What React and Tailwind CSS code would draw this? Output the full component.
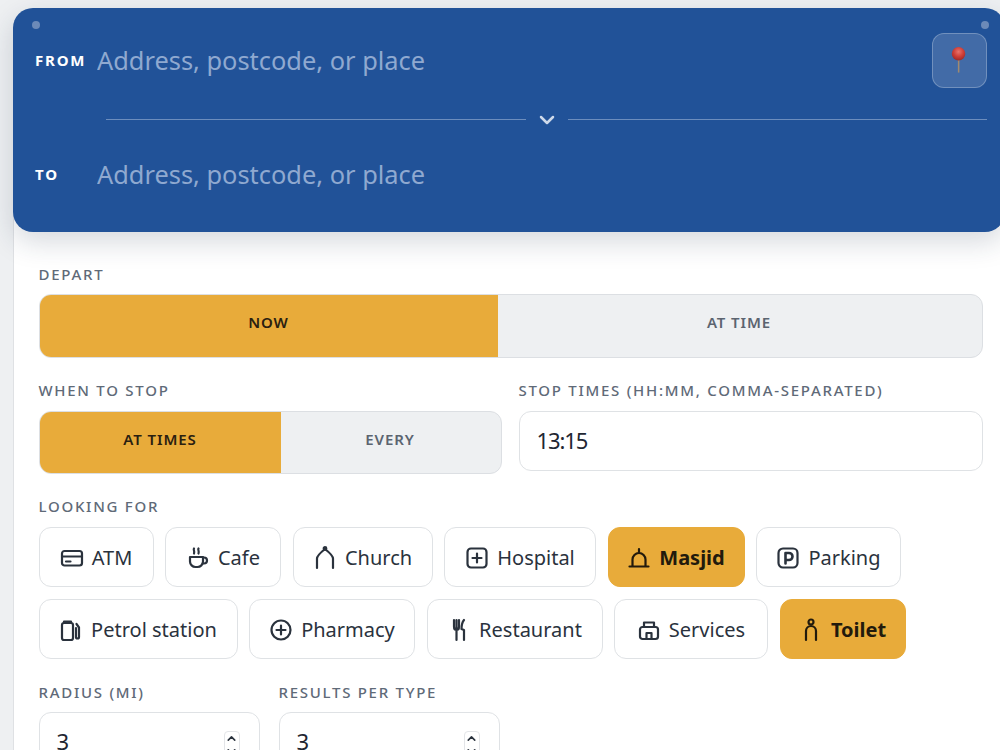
import { ChevronDown, ChevronUp } from 'lucide-react';

const uiFont = "font-['Noto_Sans',sans-serif]";
const labelClass = "block font-['Noto_Sans',sans-serif] text-[15px] font-medium leading-5 tracking-[0.115em] text-[#5f6a78]";

const icons = {
  atm: <><rect x="2" y="5" width="20" height="14.5" rx="2.5" /><path d="M2 10.5h20M6 15.500h4.500" /></>,
  cafe: <><path d="M4 11h13v4.500a5.500 5.500 0 0 1-5.500 5.500h-2A5.500 5.500 0 0 1 4 15.500z" /><path d="M17 11.500h1a3 3 0 0 1 0 6h-1.500" /><path d="M8 2.500c-1 1.200 1 2.800 0 5M12.500 2.500c-1 1.200 1 2.800 0 5" /></>,
  church: <><path d="M4 22v-9.500c0-3 3-5.500 8-9.500 5 4 8 6.500 8 9.500V22" /><circle cx="12" cy="2.500" r="1.300" fill="currentColor" /></>,
  hospital: <><rect x="2.500" y="2.500" width="19" height="19" rx="3.500" /><path d="M12 7.500v9M7.500 12h9" /></>,
  masjid: <><path d="M5.500 20v-6.500a6.500 6.500 0 0 1 13 0V20" /><path d="M2.500 20.500h19M12 3v4" /></>,
  parking: <><rect x="2.500" y="2.500" width="19" height="19" rx="4.500" /><path d="M9.500 17.500V7h3.500a3.500 3.500 0 0 1 0 7H9.500" strokeWidth="2.600" /></>,
  petrol: <><rect x="3" y="5" width="11" height="17" rx="2" /><path d="M5 5V3.500h7V5" /><path d="M17.500 6l2.500 3.500V19a1.500 1.500 0 0 1-3 0V10" /></>,
  pharmacy: <><circle cx="12" cy="12" r="9.500" /><path d="M12 7.500v9M7.500 12h9" /></>,
  restaurant: <><path d="M7 2v6.500c0 2 .8 3.500 2.500 3.500s2.500-1.500 2.500-3.500V2M9.500 2v20" /><path d="M17 22V12l-2.500-1c0-4 .8-7 2.500-9" /></>,
  services: <><path d="M7 9V4.500h10V9" /><rect x="3" y="9" width="18" height="12" rx="2.500" /><path d="M9.500 21v-6h5v6" /></>,
  toilet: <><circle cx="12" cy="4" r="2.500" /><path d="M7 22v-9a5 5 0 0 1 10 0v9" /></>,
};

const rowOne = [
  { name: 'ATM', icon: 'atm', width: 'w-[115px]' },
  { name: 'Cafe', icon: 'cafe', width: 'w-[116px]' },
  { name: 'Church', icon: 'church', width: 'w-[140px]' },
  { name: 'Hospital', icon: 'hospital', width: 'w-[152px]' },
  { name: 'Masjid', icon: 'masjid', width: 'w-[137px]', active: true },
  { name: 'Parking', icon: 'parking', width: 'w-[145px]' },
];

const rowTwo = [
  { name: 'Petrol station', icon: 'petrol', width: 'w-[199px]' },
  { name: 'Pharmacy', icon: 'pharmacy', width: 'w-[166px]' },
  { name: 'Restaurant', icon: 'restaurant', width: 'w-[176px]' },
  { name: 'Services', icon: 'services', width: 'w-[154px]' },
  { name: 'Toilet', icon: 'toilet', width: 'w-[126px]', active: true },
];

function Chip({ name, icon, width, active }) {
  return (
    <button
      className={`flex h-[60px] items-center justify-center gap-2 rounded-xl border-[1.5px] pt-px text-[20px] ${width} ${
        active ? 'border-[#e8ab3a] bg-[#e8ab3a] font-bold text-[#221a0c]' : 'border-[#dfe2e5] bg-white text-[#2a323d]'
      }`}
    >
      <svg viewBox="0 0 24 24" className="h-6 w-6 shrink-0" fill="none" stroke="currentColor" strokeWidth="2.2" strokeLinecap="round" strokeLinejoin="round">
        {icons[icon]}
      </svg>
      {name}
    </button>
  );
}

function Segment({ options, height, active }) {
  return (
    <div className={`flex overflow-hidden rounded-xl border-[1.5px] border-[#dcdfe3] bg-[#eef0f2] ${height}`}>
      {options.map((o) => (
        <button
          key={o.name}
          className={`flex items-center justify-center pb-[7px] text-[15px] font-semibold tracking-[0.06em] ${o.width} ${
            o.name === active ? 'bg-[#e8ab3a] text-[#2a2010]' : 'text-[#5b6470]'
          }`}
        >
          {o.name}
        </button>
      ))}
    </div>
  );
}

function NumberField({ label, value }) {
  return (
    <div className="w-[221px]">
      <label className={labelClass}>{label}</label>
      <div className="mt-[10px] flex h-[60px] items-start justify-between rounded-xl border-[1.5px] border-[#dfe2e5] bg-white pl-[17px] pr-[19px] pt-3 text-[22px] text-[#1f2733]">
        <span>{value}</span>
        <span className="mt-[6px] flex h-[30px] w-4 flex-col items-center rounded-[4px] border border-[#e3e5e8] text-[#2a323d]">
          <ChevronUp size={13} strokeWidth={3} />
          <ChevronDown size={13} strokeWidth={3} />
        </span>
      </div>
    </div>
  );
}

function PlaceRow({ label }) {
  return (
    <div className="flex items-center">
      <span className="w-[62px] text-[15px] font-bold tracking-[0.12em] text-white">{label}</span>
      <input
        placeholder="Address, postcode, or place"
        className="w-[700px] bg-transparent text-[25.4px] text-white outline-none placeholder:text-[#8fa9d0]"
      />
    </div>
  );
}

export default function App() {
  return (
    <div className={`h-[750px] w-[1000px] overflow-hidden bg-[#eef0f2] pt-2 ${uiFont}`}>
      <div className="relative z-10 ml-[12.5px] h-[223.5px] w-[992px] rounded-[20px] bg-[#215298] pl-[22.5px] pr-[17.5px] pt-[33px] shadow-[0_10px_28px_rgba(30,45,70,0.18)]">
        <span className="absolute left-[19.5px] top-[13px] h-2 w-2 rounded-full bg-[#6c8ab8]" />
        <span className="absolute left-[968.5px] top-[13px] h-2 w-2 rounded-full bg-[#6c8ab8]" />
        <div className="flex items-start justify-between">
          <PlaceRow label="FROM" />
          <button className="-mt-2 flex h-[55px] w-[55px] items-center justify-center rounded-xl border-[1.5px] border-white/25 bg-white/15">
            <svg viewBox="0 0 55 55" className="h-[55px] w-[55px]">
              <defs>
                <radialGradient id="pinHead" cx="50%" cy="35%" r="65%">
                  <stop offset="0%" stopColor="#e8736c" />
                  <stop offset="55%" stopColor="#cf3f38" />
                  <stop offset="100%" stopColor="#9c2a2a" />
                </radialGradient>
              </defs>
              <rect x="25.8" y="25" width="1.6" height="15" fill="#a08a70" />
              <circle cx="26.5" cy="20.5" r="7" fill="url(#pinHead)" />
            </svg>
          </button>
        </div>
        <div className="ml-[71px] mt-[19.5px] flex items-center">
          <div className="h-px w-[420px] bg-[#6c8dbd]" />
          <div className="flex w-[42px] justify-center text-[#cdd9ea]">
            <ChevronDown size={24} strokeWidth={2.5} />
          </div>
          <div className="h-px w-[419px] bg-[#6c8dbd]" />
        </div>
        <div className="mt-[23.5px]"><PlaceRow label="TO" /></div>
      </div>

      <div className="-mt-5 ml-[13px] h-[600px] border-l-[1.5px] border-[#dfe1e4] bg-white pl-[24.5px] pr-[17px] pt-[52.5px]">
        <label className={labelClass}>DEPART</label>
        <div className="mt-[10px]">
          <Segment
            active="NOW"
            height="h-[64px]"
            options={[
              { name: 'NOW', width: 'w-[458px]' },
              { name: 'AT TIME', width: 'w-[483px]' },
            ]}
          />
        </div>

        <div className="mt-[22px] flex gap-[17px]">
          <div className="w-[463px]">
            <label className={labelClass}>WHEN TO STOP</label>
            <div className="mt-[11px]">
              <Segment
                active="AT TIMES"
                height="h-[63px]"
                options={[
                  { name: 'AT TIMES', width: 'w-[241px]' },
                  { name: 'EVERY', width: 'w-[219px]' },
                ]}
              />
            </div>
          </div>
          <div className="w-[464px]">
            <label className={labelClass}>STOP TIMES (HH:MM, COMMA-SEPARATED)</label>
            <input
              defaultValue="13:15"
              className="mt-[11px] h-[60px] w-full rounded-xl border-[1.5px] border-[#dfe2e5] bg-white px-[17px] pb-[3px] text-[22px] tracking-[-0.05em] text-[#1f2733] outline-none"
            />
          </div>
        </div>

        <label className={`${labelClass} mt-[22px]`}>LOOKING FOR</label>
        <div className="mt-[11px] flex flex-col gap-3">
          <div className="flex gap-[11.5px]">
            {rowOne.map((c) => <Chip key={c.name} {...c} />)}
          </div>
          <div className="flex gap-[11.5px]">
            {rowTwo.map((c) => <Chip key={c.name} {...c} />)}
          </div>
        </div>

        <div className="mt-[23px] flex gap-[19px]">
          <NumberField label="RADIUS (MI)" value="3" />
          <NumberField label="RESULTS PER TYPE" value="3" />
        </div>
      </div>
    </div>
  );
}
